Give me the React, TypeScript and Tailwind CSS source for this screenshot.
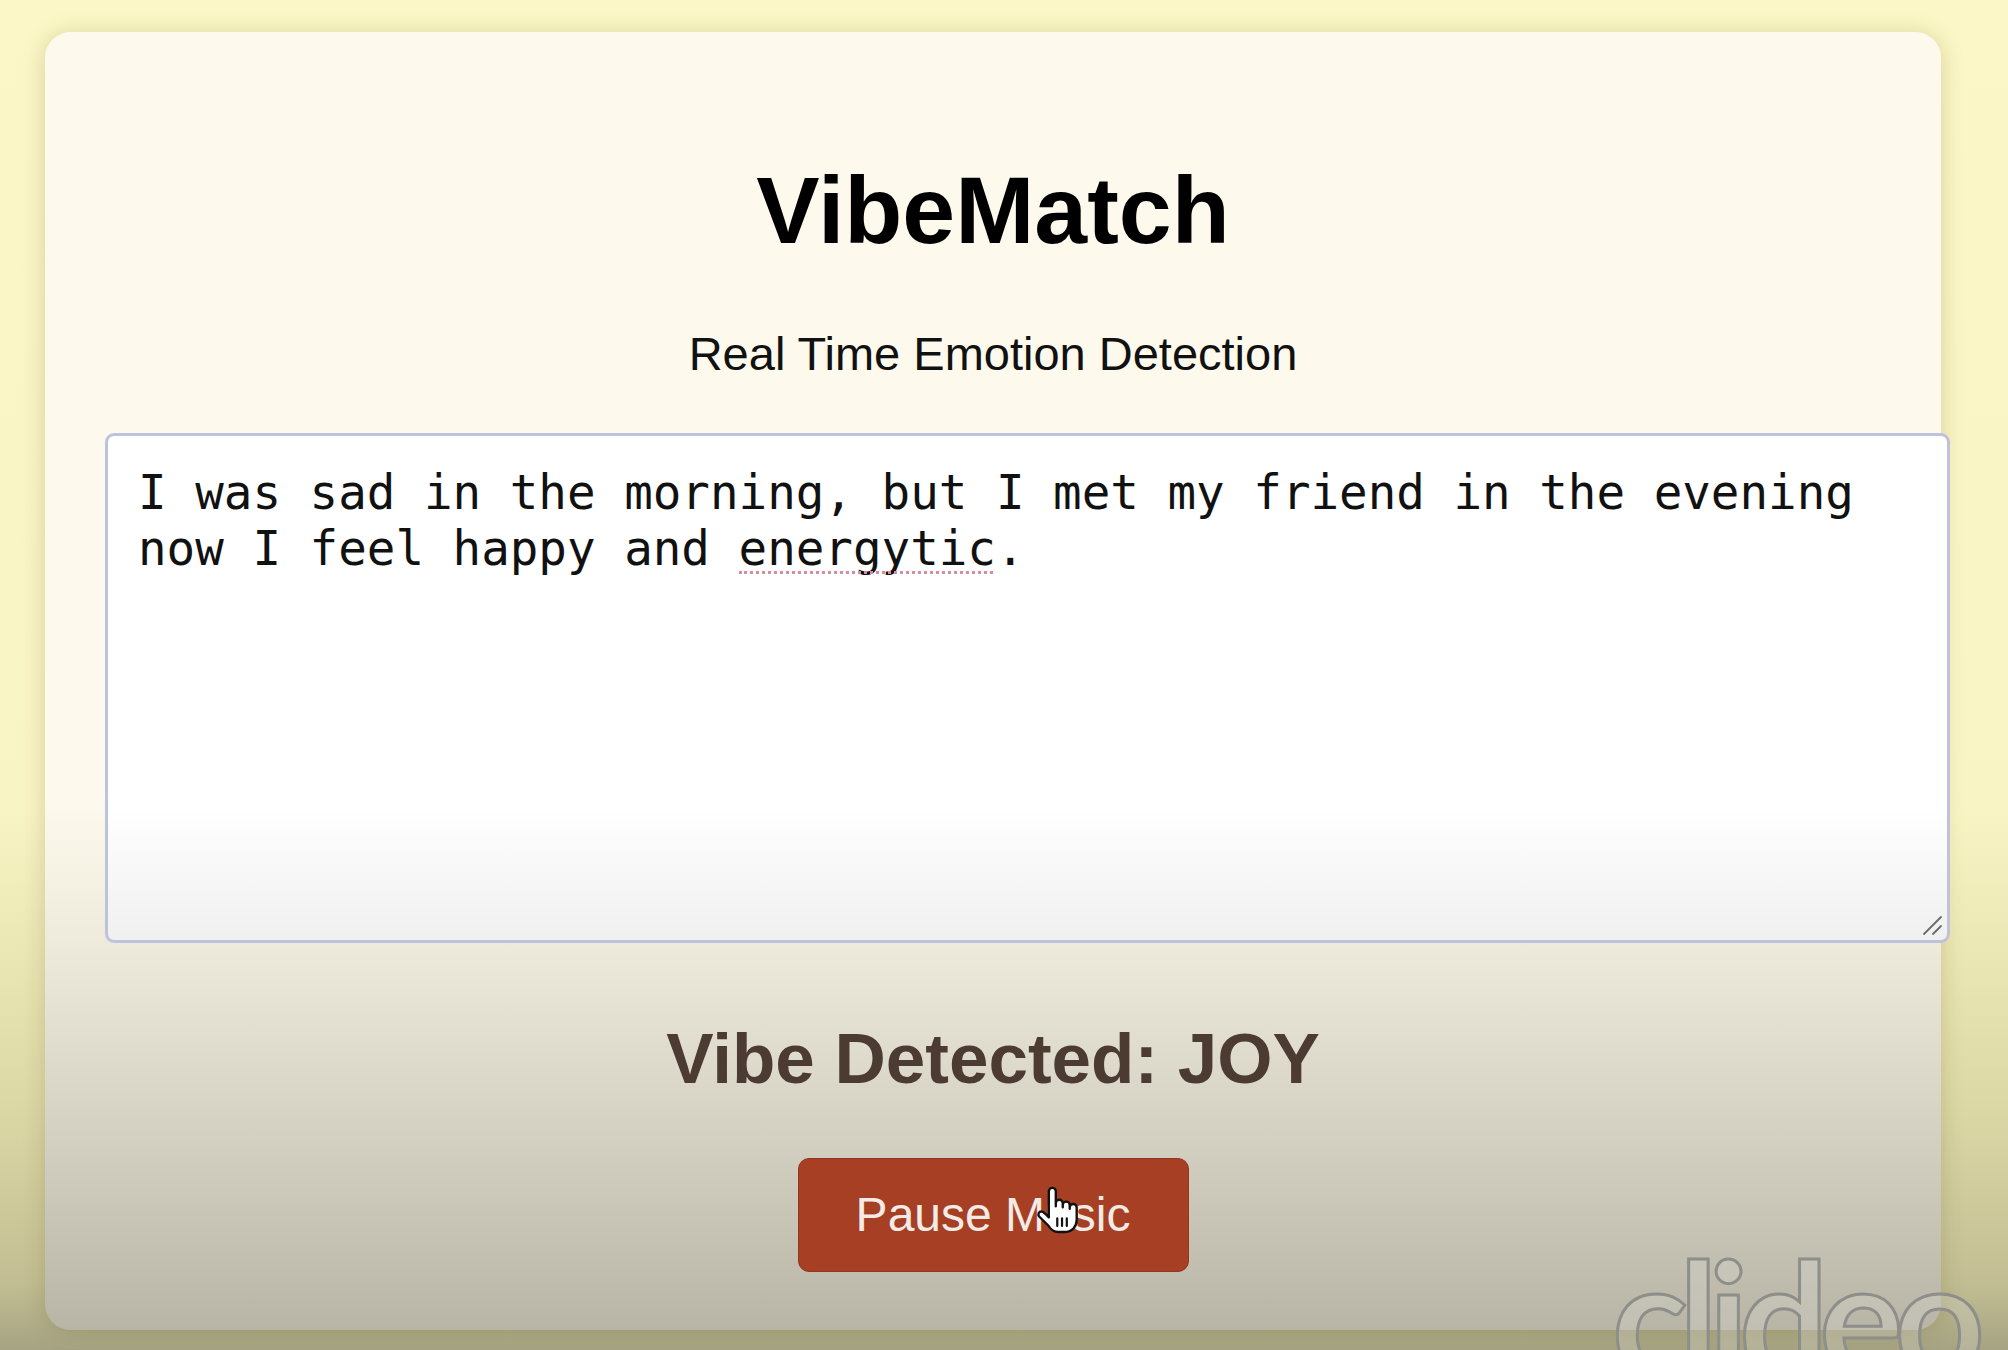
import React from "react";

const SANS = "font-['Liberation_Sans','Arial',sans-serif]";

// pointing-hand cursor drawn over the button
function HandCursor() {
  return (
    <svg width="44" height="48" viewBox="0 0 24 26" className="absolute left-[1036px] top-[1186px]">
      <path
        d="M7 15.5V2.8a1.9 1.9 0 0 1 3.8 0V11V9.3a1.9 1.9 0 0 1 3.8 0V11.5V10.3a1.9 1.9 0 0 1 3.8 0V12.3V11.6a1.9 1.9 0 0 1 3.8 0V18.5c0 3.6-2.6 6.5-6.5 6.5h-3.6c-2.6 0-4-1.2-5.3-3.4L1.6 16.4c-.7-1.3 0-2.6 1.3-2.6c.9 0 1.7.6 4.1 3.2Z"
        fill="#fff"
        stroke="#111"
        strokeWidth="1.3"
        strokeLinejoin="round"
      />
      <path d="M11.6 17.5v4.2M14.2 17.5v4.2M16.8 17.5v4.2" stroke="#111" strokeWidth="1.2" strokeLinecap="round" />
    </svg>
  );
}

export default function App() {
  return (
    <div className="relative h-[1350px] w-full overflow-hidden bg-[linear-gradient(to_bottom,#fbf7c6_0%,#f9f4c3_60%,#dcd8a6_82%,#c2be93_95%,#a6a383_100%)]">
      <div className="ml-[45px] mt-[32px] flex h-[1298px] w-[1896px] flex-col items-center rounded-[26px] bg-[linear-gradient(to_bottom,#fdf9ec_0%,#fdf9ec_59%,#efebdc_70%,#d2cfc0_86%,#bcb9aa_98%,#b8b5a6_100%)] px-[60px] pt-[131px] shadow-[0_2px_22px_rgba(90,80,20,0.22)]">
        <h1 className={`${SANS} text-[95px] font-bold leading-none text-black`}>VibeMatch</h1>
        <p className={`${SANS} mt-[72px] text-[47px] leading-none text-[#111]`}>Real Time Emotion Detection</p>

        <div className="relative mt-[56px] self-start">
          <textarea
            spellCheck={false}
            defaultValue={"I was sad in the morning, but I met my friend in the evening\nnow I feel happy and energytic."}
            className="block h-[510px] w-[1845px] shrink-0 resize-none rounded-[9px] border-[3px] border-[#bfc2dd] bg-[linear-gradient(to_bottom,#ffffff_0%,#ffffff_74%,#f0f0f0_100%)] px-[30px] pt-[29px] font-['DejaVu_Sans_Mono',monospace] text-[47.5px] leading-[1.176] text-[#111] outline-none"
          />
          {/* spellcheck squiggle under "energytic" */}
          <div className="pointer-events-none absolute left-[634px] top-[138px] w-[254px] border-b-[3px] border-dotted border-[#d58ea0]" />
          {/* resize grip */}
          <svg width="22" height="22" viewBox="0 0 22 22" className="pointer-events-none absolute bottom-[7px] right-[7px]">
            <path d="M3 20L20 3M12 20L20 12" stroke="#6a6a6a" strokeWidth="1.8" strokeLinecap="round" />
          </svg>
        </div>

        <h2 className={`${SANS} mt-[80px] text-[71px] font-bold leading-none text-[#4b3b32]`}>Vibe Detected: JOY</h2>

        <button
          className={`${SANS} mt-[64px] flex h-[114px] w-[391px] items-center justify-center rounded-[11px] border border-[#94361c] bg-[#a63f23] text-[48px] leading-none text-[#f3ebe6]`}
        >
          Pause Music
        </button>
      </div>

      <HandCursor />

      {/* video watermark */}
      <div className="pointer-events-none absolute left-[1612px] top-[1236px] font-['Lato',sans-serif] text-[158px] font-bold leading-none tracking-[-0.06em] text-[rgba(215,215,210,0.3)] [-webkit-text-stroke:3px_#8e8e8a]">
        clideo
      </div>
    </div>
  );
}
